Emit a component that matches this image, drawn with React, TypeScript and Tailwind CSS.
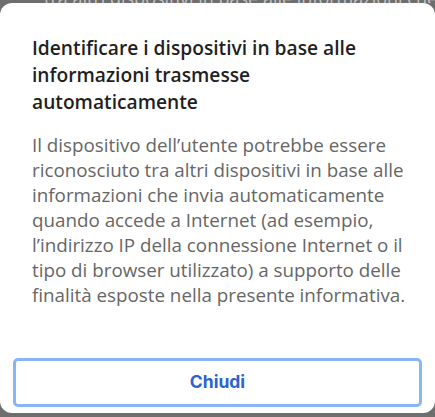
import React from 'react';

export default function App() {
  return (
    <div className="w-[435px] h-[417px] bg-[#6e6e6e] overflow-hidden flex flex-col">
      {/* Page behind the overlay, only a sliver shows */}
      <div className="h-[3px] overflow-hidden shrink-0">
        <p
          className="-mt-[14px] pl-[44px] whitespace-nowrap text-[18px] leading-[25px] text-[#c4c4c4]"
          style={{ fontFamily: '"Open Sans", sans-serif' }}
        >
          tra altri dispositivi in base alle informazioni che invia
        </p>
      </div>

      {/* Sheet */}
      <div className="h-[410px] shrink-0 bg-white rounded-[12px] flex flex-col">
        <div className="pl-[32px] pr-[22px] pt-[31px]" style={{ fontFamily: '"Open Sans", sans-serif' }}>
          <h2 className="text-[19.2px] leading-[27px] font-semibold text-[#1f1f1f]">
            Identificare i dispositivi in base alle informazioni trasmesse automaticamente
          </h2>
          <p className="mt-[18px] text-[18.8px] leading-[25px] text-[#666666]">
            Il dispositivo dell’utente potrebbe essere riconosciuto tra altri dispositivi in base alle
            informazioni che invia automaticamente quando accede a Internet (ad esempio, l’indirizzo IP
            della connessione Internet o il tipo di browser utilizzato) a supporto delle finalità esposte
            nella presente informativa.
          </p>
        </div>

        <div className="mt-auto px-[13px] pb-[6px]">
          <button
            className="w-full h-[49px] rounded-[5px] border-[3px] border-[#8ab4f8] bg-white text-[17.5px] font-bold text-[#2d62d1]"
            style={{ fontFamily: 'Inter, sans-serif' }}
          >
            Chiudi
          </button>
        </div>
      </div>
    </div>
  );
}
